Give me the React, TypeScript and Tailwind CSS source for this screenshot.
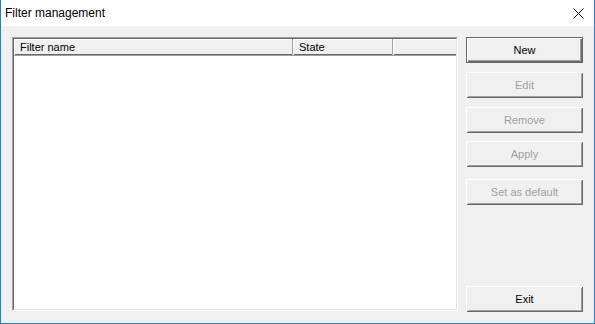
import React from 'react'

const raised =
  'shadow-[inset_1px_1px_0_#ffffff,inset_-1px_-1px_0_#696969,inset_2px_2px_0_#f0f0f0,inset_-2px_-2px_0_#a0a0a0]'

function Btn({ label, disabled, primary, className = '' }: any) {
  return (
    <div
      className={`h-[26px] w-[117px] flex items-center justify-center bg-[#f0f0f0] text-[11px] ${
        disabled ? 'text-[#a0a0a0]' : 'text-black'
      } ${
        primary
          ? 'border border-[#696969] shadow-[inset_1px_1px_0_#ffffff,inset_-1px_-1px_0_#696969,inset_-2px_-2px_0_#a0a0a0]'
          : raised
      } ${className}`}
    >
      {label}
    </div>
  )
}

export default function App() {
  return (
    <div
      className="w-[595px] h-[324px] flex flex-col border-x border-b border-[#1883d7] bg-[#f0f0f0]"
      style={{ fontFamily: '"Liberation Sans", Arial, sans-serif' }}
    >
      {/* title bar */}
      <div className="h-[26px] bg-white flex items-center justify-between pl-[4px] pr-[10px]">
        <span className="text-[12px] text-black">Filter management</span>
        <svg width="11" height="11" viewBox="0 0 11 11" className="mt-[1px]">
          <path d="M0.5 0.5 L10.5 10.5 M10.5 0.5 L0.5 10.5" stroke="#000" strokeWidth="1" fill="none" />
        </svg>
      </div>

      <div className="flex-1 flex pl-[11px] pt-[11px] gap-[8px]">
        {/* list */}
        <div className="w-[446px] h-[274px] bg-white flex flex-col border-t border-l border-[#a0a0a0] border-r border-r-white border-b border-b-white">
          <div className="flex-1 flex flex-col border-t border-l border-[#696969] border-r border-r-[#e3e3e3] border-b border-b-[#e3e3e3]">
            <div className="h-[17px] flex bg-[#f0f0f0] border-b border-[#a0a0a0] text-[11px] text-black">
              <div className="w-[279px] pl-[6px] flex items-center border-r border-[#a0a0a0] shadow-[inset_1px_1px_0_#ffffff,inset_0_-1px_0_#696969]">
                Filter name
              </div>
              <div className="w-[100px] pl-[6px] flex items-center border-r border-[#a0a0a0] shadow-[inset_1px_1px_0_#ffffff,inset_0_-1px_0_#696969]">
                State
              </div>
              <div className="flex-1 shadow-[inset_1px_1px_0_#ffffff,inset_0_-1px_0_#696969]" />
            </div>
            <div className="flex-1 bg-white" />
          </div>
        </div>

        {/* buttons */}
        <div className="flex flex-col w-[117px] h-[275px]">
          <Btn label="New" primary />
          <Btn label="Edit" disabled className="mt-[9px]" />
          <Btn label="Remove" disabled className="mt-[9px]" />
          <Btn label="Apply" disabled className="mt-[8px]" />
          <Btn label="Set as default" disabled className="mt-[12px]" />
          <Btn label="Exit" className="mt-auto" />
        </div>
      </div>
    </div>
  )
}
